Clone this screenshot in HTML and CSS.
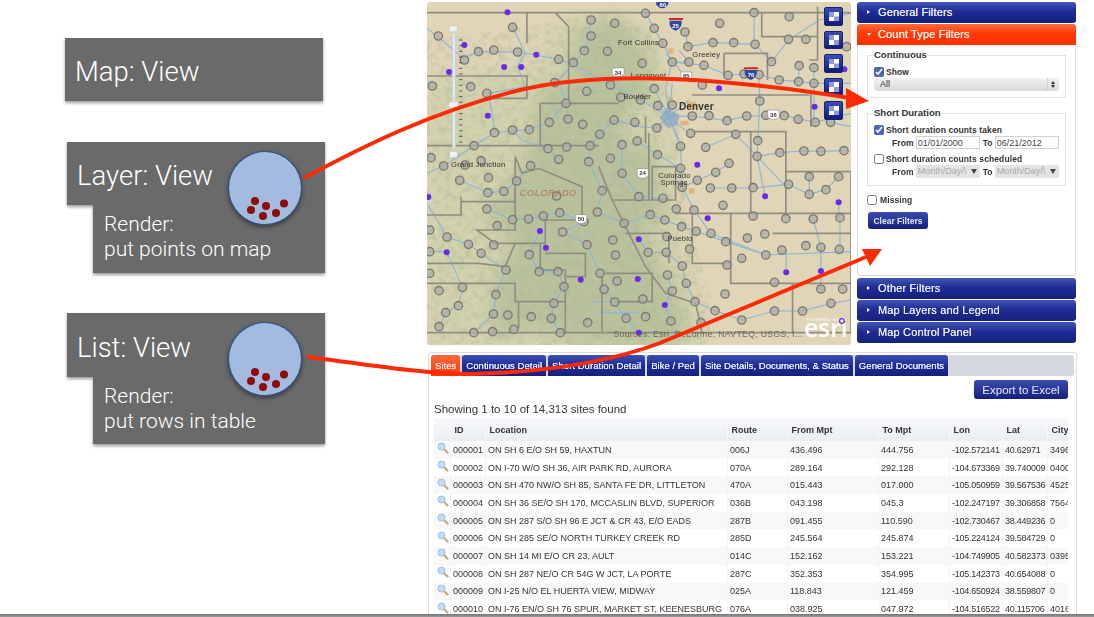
FILE: index.html
```html
<!DOCTYPE html>
<html lang="en">
<head>
    <meta charset="UTF-8">
    <title>Views</title>
    <link rel="stylesheet" href="styles.css">
</head>
<body>
    <div class="slide">
        <div class="notes">
            <div class="noteHead noteSingle">Map: View</div>

            <div class="noteGroup">
                <div class="noteHead">Layer: View</div>
                <div class="noteRender">Render:<br>put points on map</div>
                <svg class="noteDisc" viewBox="0 0 80 80">
                    <use href="#disc"/>
                </svg>
            </div>

            <div class="noteGroup noteGroupList">
                <div class="noteHead">List: View</div>
                <div class="noteRender">Render:<br>put rows in table</div>
                <svg class="noteDisc" viewBox="0 0 80 80">
                    <use href="#disc"/>
                </svg>
            </div>
        </div>

        <div class="app">
            <div class="topRow">
                <div class="map">
                    <svg class="mapArt" viewBox="6 6 1269 1029" preserveAspectRatio="none">
                        <defs>
                            <filter id="soft" x="-10%" y="-10%" width="120%" height="120%"><feGaussianBlur stdDeviation="26"/></filter>
                            <filter id="hills" x="0" y="0" width="100%" height="100%">
                                <feTurbulence type="fractalNoise" baseFrequency="0.05" numOctaves="4" seed="7"/>
                                <feColorMatrix values="0 0 0 0 0.42  0 0 0 0 0.47  0 0 0 0 0.30  2.2 0 0 0 -0.95"/>
                            </filter>
                            <clipPath id="mountains"><path d="M6 120L240 90 420 60 560 30 700 110 770 420 780 640 860 900 850 1035H6Z"/></clipPath>
                        </defs>
                        <rect x="6" y="6" width="1269" height="1029" fill="#e0d5b7"/>
                        <path class="greenPale" filter="url(#soft)" d="M6 230L330 200 400 60 600 30 700 120 760 640 840 1035H6Z"/>
                        <path class="green" filter="url(#soft)" d="M450 90L560 50 660 130 680 280 620 320 580 420 680 440 720 640 650 700 770 920 790 1035H480L320 980 200 1020 200 850 270 730 180 640 300 480 350 260 440 240Z"/>
                        <g clip-path="url(#mountains)"><rect x="6" y="6" width="1269" height="1029" filter="url(#hills)" opacity=".55"/></g>

                        <g class="rivers">
                            <path d="M6 85L50 120 115 175 160 155 277 156 330 165 400 178 440 190 555 255 650 300"/>
                            <path d="M262 82L300 160 277 200 300 260 190 280 210 398"/>
                            <path d="M497 60L480 150 400 240 420 310 372 367 312 389 208 398 147 437 56 498 6 520"/>
                            <path d="M660 40L686 85 712 130 740 186 720 260 730 350 765 440 770 562 805 630 855 700 1020 765 1275 755"/>
                            <path d="M780 96L787 140 860 128 988 133 1037 185 1090 118 1180 60 1275 40"/>
                            <path d="M740 186L835 196 907 226 955 222 1000 224 1060 240 1120 245 1165 250 1275 250"/>
                            <path d="M985 38L985 130M1000 224L1002 303 996 422 994 469 1018 589"/>
                            <path d="M730 350L800 348 904 362 963 348 1075 347 1168 367 1275 340"/>
                            <path d="M730 350L694 384 640 380 566 360 523 403 494 437 490 485 530 572 516 636 596 670 674 644 768 680 812 694 900 725 1020 765"/>
                            <path d="M400 478L368 446 290 420 262 390M316 497L274 543 236 574 188 578 104 541"/>
                            <path d="M185 627L262 659 310 657 403 638 476 665 412 696 485 734 524 820 536 868 568 906 602 955 640 1000"/>
                            <path d="M6 610L66 711 130 733 168 760 242 810 212 884 205 942 146 998"/>
                            <path d="M344 693L312 764 342 815 398 815 416 860 386 910 378 955 405 998"/>
                            <path d="M994 469L1062 458 1134 453 1185 454 1254 452M1150 530L1150 583 1200 569 1238 530M854 564H982L1088 553 1150 583"/>
                            <path d="M840 442L930 403 994 469 1080 560M910 490L870 517 815 541 770 562"/>
                            <path d="M640 718L668 757 722 757 770 798 782 850 808 905 868 932 948 960 1046 933 1130 933 1215 910 1275 900"/>
                            <path d="M1081 817V750M1185 813V742M1185 867V813M1242 653V748M1238 607V653M1162 657L1185 742"/>
                            <path d="M6 755H65L112 862 100 917 62 938 42 980"/>
                            <path d="M500 905H640M520 938H640M736 963L718 915 740 873 726 825"/>
                            <path d="M1120 197L1118 245M1164 203V367M1214 367L1275 380"/>
                            <path d="M590 434L590 520 640 590 712 595M635 423L696 464 765 505"/>
                            <path d="M730 350L686 266M730 350L740 250M730 350L790 300M730 350L645 300M730 350L790 400M730 350L697 317M730 350L760 420M740 186L790 186 760 150M720 160L780 230"/>
                        </g>
                        <path class="urban" d="M702 352L725 325 762 345 756 376 726 384Z"/>
                        <path class="towns" d="M728 145h16v16h-16zM782 305h30v22h-24zM730 292h12v8h-12zM765 362h24v14h-24zM790 565h16v16h-16z"/>

                        <g class="borders">
                            <path d="M6 38H1275M6 998H1275M6 228H305V295H190M305 38V130M390 38L430 80V300"/>
                            <path d="M6 437H520M345 310H580M345 310V437M6 645H108V590M108 605H270V470"/>
                            <path d="M270 470L290 520 340 505 400 530 470 560 470 660M270 560V690H155L210 730H360V660H470"/>
                            <path d="M6 790H160L240 800 270 730M6 850H270V905H420V810H345V730M280 905V985M420 905V998"/>
                            <path d="M560 600H750V500H680V600M670 400V600M660 350V430M520 500L560 600 610 700 660 800 720 880 810 910 830 1000"/>
                            <path d="M750 640H1080V395H800M975 395V640M915 640V850H1275M1080 640H1275M1080 515H1275V1000"/>
                            <path d="M1150 180H1175V20M895 160H1025V240M895 160V230M1008 38V110H1175M1100 850V1000M1040 700H1275"/>
                            <path d="M540 820H680V905H570M530 830V1000M360 760H480V830H420M800 640V790H915M600 700H730V790"/>
                            <path d="M800 285H1150M1155 280V380"/>
                        </g>

                        <g class="nodes">
                            <circle cx="660" cy="40"/><circle cx="985" cy="38"/><circle cx="1090" cy="50"/><circle cx="497" cy="60"/><circle cx="568" cy="70"/><circle cx="262" cy="82"/><circle cx="882" cy="70"/><circle cx="686" cy="85"/><circle cx="778" cy="96"/><circle cx="40" cy="108"/><circle cx="497" cy="108"/><circle cx="1088" cy="118"/><circle cx="1140" cy="118"/><circle cx="1262" cy="140"/><circle cx="862" cy="128"/><circle cx="924" cy="128"/><circle cx="988" cy="133"/><circle cx="787" cy="140"/><circle cx="160" cy="155"/><circle cx="206" cy="150"/><circle cx="277" cy="156"/><circle cx="477" cy="152"/><circle cx="546" cy="154"/><circle cx="712" cy="130"/><circle cx="400" cy="178"/><circle cx="118" cy="180"/><circle cx="444" cy="188"/><circle cx="650" cy="190"/><circle cx="740" cy="186"/><circle cx="790" cy="186"/><circle cx="835" cy="196"/><circle cx="1037" cy="185"/><circle cx="1120" cy="197"/><circle cx="1164" cy="203"/><circle cx="907" cy="226"/><circle cx="955" cy="222"/><circle cx="1000" cy="224"/><circle cx="1060" cy="240"/><circle cx="1118" cy="245"/><circle cx="1164" cy="250"/>
                            <circle cx="22" cy="258"/><circle cx="137" cy="260"/><circle cx="185" cy="280"/><circle cx="388" cy="248"/><circle cx="555" cy="255"/><circle cx="484" cy="274"/><circle cx="686" cy="266"/><circle cx="830" cy="255"/><circle cx="586" cy="292"/><circle cx="645" cy="300"/><circle cx="697" cy="317"/><circle cx="740" cy="315"/><circle cx="422" cy="310"/><circle cx="1002" cy="303"/><circle cx="372" cy="367"/><circle cx="428" cy="357"/><circle cx="472" cy="373"/><circle cx="566" cy="360"/><circle cx="628" cy="367"/><circle cx="694" cy="384"/><circle cx="800" cy="348"/><circle cx="850" cy="347"/><circle cx="904" cy="362"/><circle cx="963" cy="348"/><circle cx="1020" cy="346"/><circle cx="1075" cy="347"/><circle cx="1117" cy="358"/><circle cx="1168" cy="367"/><circle cx="1214" cy="367"/><circle cx="208" cy="398"/><circle cx="262" cy="390"/><circle cx="312" cy="389"/><circle cx="523" cy="403"/><circle cx="795" cy="400"/><circle cx="930" cy="403"/><circle cx="996" cy="422"/><circle cx="147" cy="437"/><circle cx="368" cy="446"/><circle cx="424" cy="441"/><circle cx="494" cy="437"/><circle cx="590" cy="434"/><circle cx="635" cy="423"/><circle cx="765" cy="439"/><circle cx="840" cy="442"/>
                            <circle cx="994" cy="469"/><circle cx="1062" cy="458"/><circle cx="1134" cy="453"/><circle cx="1185" cy="454"/><circle cx="1254" cy="452"/><circle cx="18" cy="473"/><circle cx="56" cy="498"/><circle cx="120" cy="495"/><circle cx="168" cy="482"/><circle cx="316" cy="497"/><circle cx="400" cy="478"/><circle cx="490" cy="485"/><circle cx="555" cy="475"/><circle cx="696" cy="464"/><circle cx="765" cy="505"/><circle cx="910" cy="490"/><circle cx="870" cy="517"/><circle cx="590" cy="520"/><circle cx="104" cy="541"/><circle cx="190" cy="533"/><circle cx="274" cy="543"/><circle cx="815" cy="541"/><circle cx="1150" cy="530"/><circle cx="1238" cy="530"/><circle cx="1088" cy="553"/><circle cx="854" cy="564"/><circle cx="918" cy="564"/><circle cx="982" cy="563"/><circle cx="770" cy="562"/><circle cx="530" cy="572"/><circle cx="188" cy="578"/><circle cx="236" cy="574"/><circle cx="1200" cy="569"/><circle cx="1150" cy="583"/><circle cx="640" cy="590"/><circle cx="712" cy="595"/><circle cx="892" cy="616"/><circle cx="394" cy="588"/><circle cx="185" cy="627"/><circle cx="752" cy="627"/><circle cx="805" cy="630"/><circle cx="403" cy="638"/><circle cx="516" cy="636"/><circle cx="262" cy="659"/><circle cx="310" cy="657"/><circle cx="354" cy="648"/><circle cx="476" cy="665"/><circle cx="596" cy="670"/><circle cx="674" cy="644"/><circle cx="718" cy="660"/><circle cx="982" cy="648"/><circle cx="1080" cy="656"/><circle cx="1162" cy="657"/><circle cx="1242" cy="653"/>
                            <circle cx="216" cy="677"/><circle cx="768" cy="680"/><circle cx="812" cy="694"/><circle cx="856" cy="700"/><circle cx="900" cy="725"/><circle cx="965" cy="714"/><circle cx="1017" cy="702"/><circle cx="14" cy="690"/><circle cx="412" cy="696"/><circle cx="66" cy="711"/><circle cx="130" cy="733"/><circle cx="206" cy="735"/><circle cx="562" cy="720"/><circle cx="724" cy="710"/><circle cx="485" cy="734"/><circle cx="14" cy="755"/><circle cx="168" cy="760"/><circle cx="312" cy="764"/><circle cx="668" cy="757"/><circle cx="722" cy="757"/><circle cx="792" cy="747"/><circle cx="570" cy="765"/><circle cx="1020" cy="765"/><circle cx="1068" cy="750"/><circle cx="1140" cy="737"/><circle cx="1185" cy="742"/><circle cx="1240" cy="748"/><circle cx="948" cy="775"/><circle cx="242" cy="810"/><circle cx="904" cy="795"/><circle cx="770" cy="798"/><circle cx="342" cy="815"/><circle cx="398" cy="815"/><circle cx="524" cy="820"/><circle cx="726" cy="825"/><circle cx="14" cy="820"/><circle cx="1046" cy="847"/><circle cx="575" cy="843"/><circle cx="782" cy="850"/><circle cx="112" cy="862"/><circle cx="42" cy="872"/><circle cx="416" cy="860"/><circle cx="536" cy="868"/><circle cx="740" cy="873"/><circle cx="1185" cy="867"/><circle cx="1250" cy="867"/><circle cx="212" cy="884"/><circle cx="898" cy="882"/><circle cx="652" cy="897"/><circle cx="568" cy="906"/><circle cx="386" cy="910"/><circle cx="808" cy="905"/><circle cx="100" cy="917"/><circle cx="1215" cy="910"/><circle cx="62" cy="938"/><circle cx="205" cy="942"/><circle cx="248" cy="945"/><circle cx="318" cy="950"/><circle cx="1046" cy="933"/><circle cx="1130" cy="933"/><circle cx="868" cy="932"/><circle cx="660" cy="950"/><circle cx="602" cy="955"/><circle cx="378" cy="955"/><circle cx="948" cy="960"/><circle cx="736" cy="963"/><circle cx="826" cy="968"/><circle cx="487" cy="968"/><circle cx="42" cy="980"/><circle cx="266" cy="988"/><circle cx="146" cy="998"/><circle cx="202" cy="995"/><circle cx="405" cy="998"/>
                        </g>
                        <g class="sites">
                            <circle cx="247" cy="37"/><circle cx="118" cy="135"/><circle cx="333" cy="164"/><circle cx="237" cy="201"/><circle cx="288" cy="201"/><circle cx="72" cy="216"/><circle cx="188" cy="347"/><circle cx="880" cy="265"/><circle cx="1166" cy="320"/><circle cx="815" cy="494"/><circle cx="10" cy="591"/><circle cx="1018" cy="589"/><circle cx="1238" cy="607"/><circle cx="846" cy="655"/><circle cx="344" cy="693"/><circle cx="640" cy="718"/><circle cx="362" cy="743"/><circle cx="65" cy="757"/><circle cx="466" cy="839"/><circle cx="637" cy="837"/><circle cx="1081" cy="817"/><circle cx="1185" cy="813"/><circle cx="718" cy="915"/><circle cx="640" cy="998"/><circle cx="1255" cy="208"/>
                        </g>

                        <g class="shields">
                            <path d="M692 6H728V14Q710 36 692 14Z"/><path d="M732 62H768V72Q766 86 750 92 734 86 732 72Z"/><path d="M957 210H993V220Q991 234 975 240 959 234 957 220Z"/>
                            <path class="redBar" d="M730 54H772v6H730ZM955 202H997v6H955Z"/>
                        </g>
                        <g class="usShields">
                            <path d="M560 204H596V222Q590 230 578 230 566 230 560 222Z"/><path d="M766 216H798V236H766Z"/><path d="M1026 330H1060V352Q1043 366 1026 352Z"/><path d="M635 506H668V528Q651 542 635 528Z"/><path d="M450 644H484V664Q467 678 450 664Z"/>
                        </g>
                        <g class="shieldText">
                            <text x="712" y="20" fill="#fff">80</text><text x="750" y="83" fill="#fff">25</text><text x="976" y="232" fill="#fff">76</text>
                            <text x="578" y="224">34</text><text x="782" y="233">85</text><text x="1043" y="351">36</text><text x="651" y="526">24</text><text x="467" y="664">50</text>
                        </g>

                        <g class="places">
                            <text x="578" y="135">Fort Collins</text>
                            <text x="800" y="171">Greeley</text>
                            <text x="616" y="234">Longmont</text>
                            <text x="594" y="297">Boulder</text>
                            <text class="placeBig" x="760" y="330">Denver</text>
                            <text x="78" y="500">Grand Junction</text>
                            <text class="stateName" x="284" y="587">COLORADO</text>
                            <text x="698" y="533">Colorado</text>
                            <text x="705" y="555">Springs</text>
                            <text x="726" y="724">Pueblo</text>
                            <text class="sources" x="564" y="1011">Sources: Esri, DeLorme, NAVTEQ, USGS, I...</text>
                        </g>

                        <g class="zoomBar">
                            <rect class="zoomTrack" x="82" y="100" width="9" height="345"/>
                            <path class="zoomTicks" d="M102 120h10M102 137h10M102 154h10M102 171h10M102 188h10M102 205h10M102 222h10M102 239h10M102 256h10M102 273h10M102 290h10M102 307h10M102 324h10M102 341h10M102 358h10M102 375h10M102 392h10M102 409h10M102 426h10"/>
                            <rect class="zoomEnd" x="74" y="78" width="22" height="17"/>
                            <rect class="zoomEnd" x="74" y="455" width="22" height="17"/>
                            <rect class="zoomHandle" x="72" y="306" width="27" height="17"/>
                        </g>

                        <text class="esriSmall" x="1142" y="964">POWERED BY</text>
                        <text class="esriMark" x="1134" y="1011">esri</text>
                        <circle class="esriDot" cx="1248" cy="963" r="7"/>
                    </svg>

                    <div class="mapTools">
                        <div class="mapTool"><i></i></div>
                        <div class="mapTool"><i></i></div>
                        <div class="mapTool"><i></i></div>
                        <div class="mapTool"><i></i></div>
                        <div class="mapTool"><i></i></div>
                    </div>
                </div>

                <div class="accordion">
                    <div class="accHead"><span class="caret"></span>General Filters</div>
                    <div class="accHead accOpen"><span class="caret caretDown"></span>Count Type Filters</div>
                    <div class="accBody">
                        <fieldset class="group">
                            <legend>Continuous</legend>
                            <label class="check"><input type="checkbox" checked>Show</label>
                            <div class="selectBox">All<span class="selectArrows"></span></div>
                        </fieldset>
                        <fieldset class="group groupShort">
                            <legend>Short Duration</legend>
                            <label class="check"><input type="checkbox" checked>Short duration counts taken</label>
                            <div class="dates">
                                <span>From</span><input class="dateInput" type="text" value="01/01/2000">
                                <span>To</span><input class="dateInput" type="text" value="06/21/2012">
                            </div>
                            <label class="check checkLater"><input type="checkbox">Short duration counts scheduled</label>
                            <div class="dates">
                                <span>From</span><div class="dateOff">Month/Day/\</div>
                                <span>To</span><div class="dateOff">Month/Day/\</div>
                            </div>
                        </fieldset>
                        <label class="check checkMissing"><input type="checkbox">Missing</label>
                        <button class="clearBtn">Clear Filters</button>
                    </div>
                    <div class="accHead"><span class="caret"></span>Other Filters</div>
                    <div class="accHead"><span class="caret"></span>Map Layers and Legend</div>
                    <div class="accHead"><span class="caret"></span>Map Control Panel</div>
                </div>
            </div>

            <div class="sitesPanel">
                <div class="tabs">
                    <div class="tab tabActive">Sites</div>
                    <div class="tab">Continuous Detail</div>
                    <div class="tab">Short Duration Detail</div>
                    <div class="tab">Bike / Ped</div>
                    <div class="tab">Site Details, Documents, &amp; Status</div>
                    <div class="tab">General Documents</div>
                </div>
                <div class="sitesBody">
                    <div class="exportRow"><button class="exportBtn">Export to Excel</button></div>
                    <div class="showing">Showing 1 to 10 of 14,313 sites found</div>
                    <div class="tableWrap">
                        <table class="siteTable">
                            <colgroup>
                                <col class="colIcon"><col class="colId"><col class="colLoc"><col class="colRoute"><col class="colFrom"><col class="colTo"><col class="colLon"><col class="colLat"><col class="colCity">
                            </colgroup>
                            <thead>
                                <tr><th></th><th>ID</th><th>Location</th><th>Route</th><th>From Mpt</th><th>To Mpt</th><th>Lon</th><th>Lat</th><th>City</th></tr>
                            </thead>
                            <tbody>
                                <tr><td><svg class="lens"><use href="#lens"/></svg></td><td>000001</td><td>ON SH 6 E/O SH 59, HAXTUN</td><td>006J</td><td>436.496</td><td>444.756</td><td>-102.572141</td><td>40.62971</td><td>3496</td></tr>
                                <tr><td><svg class="lens"><use href="#lens"/></svg></td><td>000002</td><td>ON I-70 W/O SH 36, AIR PARK RD, AURORA</td><td>070A</td><td>289.164</td><td>292.128</td><td>-104.673369</td><td>39.740009</td><td>0400</td></tr>
                                <tr><td><svg class="lens"><use href="#lens"/></svg></td><td>000003</td><td>ON SH 470 NW/O SH 85, SANTA FE DR, LITTLETON</td><td>470A</td><td>015.443</td><td>017.000</td><td>-105.050959</td><td>39.567536</td><td>4525</td></tr>
                                <tr><td><svg class="lens"><use href="#lens"/></svg></td><td>000004</td><td>ON SH 36 SE/O SH 170, MCCASLIN BLVD, SUPERIOR</td><td>036B</td><td>043.198</td><td>045.3</td><td>-102.247197</td><td>39.306858</td><td>7564</td></tr>
                                <tr><td><svg class="lens"><use href="#lens"/></svg></td><td>000005</td><td>ON SH 287 S/O SH 96 E JCT &amp; CR 43, E/O EADS</td><td>287B</td><td>091.455</td><td>110.590</td><td>-102.730467</td><td>38.449236</td><td>0</td></tr>
                                <tr><td><svg class="lens"><use href="#lens"/></svg></td><td>000006</td><td>ON SH 285 SE/O NORTH TURKEY CREEK RD</td><td>285D</td><td>245.564</td><td>245.874</td><td>-105.224124</td><td>39.584729</td><td>0</td></tr>
                                <tr><td><svg class="lens"><use href="#lens"/></svg></td><td>000007</td><td>ON SH 14 MI E/O CR 23, AULT</td><td>014C</td><td>152.162</td><td>153.221</td><td>-104.749905</td><td>40.582373</td><td>0395</td></tr>
                                <tr><td><svg class="lens"><use href="#lens"/></svg></td><td>000008</td><td>ON SH 287 NE/O CR 54G W JCT, LA PORTE</td><td>287C</td><td>352.353</td><td>354.995</td><td>-105.142373</td><td>40.654088</td><td>0</td></tr>
                                <tr><td><svg class="lens"><use href="#lens"/></svg></td><td>000009</td><td>ON I-25 N/O EL HUERTA VIEW, MIDWAY</td><td>025A</td><td>118.843</td><td>121.459</td><td>-104.650924</td><td>38.559807</td><td>0</td></tr>
                                <tr><td><svg class="lens"><use href="#lens"/></svg></td><td>000010</td><td>ON I-76 EN/O SH 76 SPUR, MARKET ST, KEENESBURG</td><td>076A</td><td>038.925</td><td>047.972</td><td>-104.516522</td><td>40.115706</td><td>4016</td></tr>
                            </tbody>
                        </table>
                    </div>
                </div>
            </div>
        </div>

        <svg class="arrows" viewBox="0 0 1094 617">
            <path d="M304 178C360 148 430 112 520 90C580 76 650 76 720 82C770 86 815 92 850 98"/>
            <polygon points="846,88 869,101 846,109"/>
            <path d="M307 357C350 362 420 374 470 374C560 372 620 358 660 343L866 257"/>
            <polygon points="882,249 862,249 870,266"/>
        </svg>
    </div>
    <div class="slideEdge"></div>

    <svg class="iconDefs">
        <defs>
            <g id="disc">
                <circle cx="40" cy="40" r="36.5" fill="#a4bbe0" stroke="#2f5488" stroke-width="1.2"/>
                <g fill="#8f0c0c">
                    <circle cx="30" cy="53" r="4"/><circle cx="41" cy="58" r="4"/><circle cx="59" cy="55.500" r="4"/>
                    <circle cx="26" cy="62" r="4"/><circle cx="38" cy="68" r="4"/><circle cx="51" cy="65" r="4"/>
                </g>
            </g>
            <g id="lens">
                <path d="M7 7L10.500 10.500" stroke="#c9a878" stroke-width="2.200" stroke-linecap="round"/>
                <circle cx="4.500" cy="4.500" r="3.500" fill="#c4dcf2" stroke="#9cc0e0"/>
            </g>
        </defs>
    </svg>
</body>
</html>
```

FILE: styles.css
```css
:root{
    --navy: #1f2c95;
    --navyDark: #16207c;
    --orange: #ff3a06;
    --cardGrey: #6a6a6a;
    --arrowRed: #fd2a06;
}
*{
    box-sizing: border-box;
}
html{
    height: 100%;
}
body{
    height: 617px;
    margin: 0;
    display: flex;
    flex-direction: column;
    background: #ffffff;
    font-family: "Liberation Sans", Arial, sans-serif;
    overflow: hidden;
}
.slide{
    position: relative;
    flex: 1;
    min-height: 0;
    display: flex;
    overflow: hidden;
}
.slideEdge{
    height: 3px;
    background: linear-gradient(#70757a, #9a9da1);
}
.iconDefs{
    position: absolute;
    width: 0;
    height: 0;
}

/* left hand notes */
.notes{
    width: 427px;
    flex: none;
    padding: 38px 0 0 65px;
    color: #ffffff;
    font-family: Roboto, "Liberation Sans", sans-serif;
    font-weight: 300;
}
.noteHead{
    width: 258px;
    height: 63px;
    padding: 4px 0 0 10px;
    display: flex;
    align-items: center;
    background: var(--cardGrey);
    box-shadow: 0 2px 3px rgba(0,0,0,0.4);
    font-size: 27.500px;
}
.noteGroup{
    position: relative;
    width: 258px;
    margin: 41px 0 0 2px;
}
.noteGroupList{
    margin-top: 40px;
}
.noteGroupList .noteHead{
    height: 64px;
}
.noteGroupList .noteRender{
    height: 67px;
}
.noteRender{
    position: relative;
    height: 68px;
    margin-left: 26px;
    padding: 7px 0 0 11px;
    background: var(--cardGrey);
    box-shadow: 0 2px 3px rgba(0,0,0,0.4);
    font-size: 21px;
    line-height: 25px;
}
.noteDisc{
    position: absolute;
    left: 158px;
    top: 6px;
    width: 80px;
    height: 80px;
    filter: drop-shadow(0 2px 2px rgba(0,0,0,0.45));
}

/* app screenshot */
.app{
    width: 650px;
    flex: none;
    padding-top: 2px;
    filter: blur(0.35px);
}
.topRow{
    display: flex;
    gap: 6px;
}
.map{
    position: relative;
    width: 424px;
    height: 343px;
    flex: none;
    border-radius: 3px;
    overflow: hidden;
}
.mapArt{
    display: block;
    width: 100%;
    height: 100%;
}
.green{
    fill: #b9c29c;
}
.greenPale{
    fill: #d3d2ad;
}
.rivers path{
    fill: none;
    stroke: #8fb5d8;
    stroke-width: 3.500;
}
.urban{
    fill: #8aa6c6;
    opacity: 0.75;
}
.towns{
    fill: #dca765;
    opacity: 0.7;
}
.borders path{
    fill: none;
    stroke: #908e83;
    stroke-width: 5;
}
.nodes circle{
    r: 12.500px;
    fill: #b0aea4;
    fill-opacity: 0.8;
    stroke: #7a7972;
    stroke-width: 4;
}
.sites circle{
    r: 9px;
    fill: #6a2be8;
}
.shields path{
    fill: #2f4a9c;
}
.shields .redBar{
    fill: #d7281f;
}
.usShields path{
    fill: #ffffff;
    stroke: #777777;
    stroke-width: 1.500;
}
.shieldText text{
    font-size: 18px;
    font-weight: 700;
    text-anchor: middle;
    fill: #333333;
}
.shieldText text[fill]{
    fill: #ffffff;
}
.places text{
    font-size: 23px;
    fill: #35342e;
    letter-spacing: 0.5px;
}
.places .placeBig{
    font-size: 30px;
    font-weight: 700;
}
.places .stateName{
    font-size: 27px;
    font-style: italic;
    fill: #b07258;
    letter-spacing: 2px;
}
.places .sources{
    font-size: 26px;
    fill: #55534c;
    opacity: 0.8;
    letter-spacing: 1px;
}
.zoomTrack{
    fill: #dfe9f3;
    stroke: #a9bfd8;
}
.zoomTicks{
    stroke: #444444;
    stroke-width: 2.500;
}
.zoomEnd,
.zoomHandle{
    fill: #eef1f6;
    stroke: #b6c4d6;
}
.esriSmall{
    font-size: 13px;
    fill: #ffffff;
    letter-spacing: 1px;
}
.esriMark{
    font-family: "Open Sans", sans-serif;
    font-size: 74px;
    font-weight: 600;
    fill: #ffffff;
}
.esriDot{
    fill: #ffffff;
    stroke: #6a2be8;
    stroke-width: 4;
}
.mapTools{
    position: absolute;
    top: 5px;
    right: 8px;
    display: flex;
    flex-direction: column;
    gap: 5px;
}
.mapTool{
    width: 19px;
    height: 18.500px;
    padding: 3.500px;
    background: linear-gradient(#3c4cb4, #101a78);
    border: 1px solid #1a2270;
    border-radius: 2px;
}
.mapTool i{
    display: block;
    width: 100%;
    height: 100%;
    background:
        linear-gradient(#ffffff, #ffffff) right top / 50% 50% no-repeat,
        linear-gradient(#ffffff, #ffffff) left bottom / 50% 50% no-repeat,
        #8f9ad8;
}

/* accordion */
.accordion{
    width: 219px;
    flex: none;
    display: flex;
    flex-direction: column;
    gap: 1px;
}
.accHead{
    height: 21px;
    padding: 0 0 1px 10px;
    display: flex;
    align-items: center;
    background: linear-gradient(#4355b6, var(--navy) 45%, var(--navyDark));
    border-radius: 3px;
    color: #e4e8fb;
    font-size: 11px;
    letter-spacing: 0.15px;
    text-shadow: 0 0 0.6px #ffffff;
}
.accOpen{
    background: linear-gradient(#ff6a3a, var(--orange) 45%, #fb3000);
    border-radius: 3px 3px 0 0;
    color: #ffece6;
}
.caret{
    width: 0;
    height: 0;
    margin-right: 8px;
    border-left: 3px solid #ffffff;
    border-top: 2.500px solid transparent;
    border-bottom: 2.500px solid transparent;
}
.caretDown{
    border-top: 3px solid #ffffff;
    border-bottom: 0;
    border-left: 2.500px solid transparent;
    border-right: 2.500px solid transparent;
    margin-right: 7px;
}
.accBody{
    height: 231px;
    margin: -1px 0 1px;
    padding: 4px 9px 0;
    border: 1px solid #dcdcdc;
    border-top: 0;
    border-radius: 0 0 3px 3px;
    background: #ffffff;
    color: #333333;
    font-size: 8.500px;
    font-weight: 700;
}
.group{
    min-width: 0;
    height: 49px;
    margin: 0;
    padding: 5px 6px 0;
    border: 1px solid #e2e2e2;
}
.group legend{
    padding: 0;
    font-size: 9.500px;
    line-height: 12px;
    color: #333333;
}
.groupShort{
    height: 79px;
    margin-top: 9px;
}
.check{
    display: flex;
    align-items: center;
    height: 12px;
    letter-spacing: 0.1px;
}
.check input{
    width: 10px;
    height: 10px;
    margin: 0 2px 0 0;
    accent-color: #4a66b8;
}
.selectBox{
    position: relative;
    height: 13px;
    padding-left: 6px;
    border-radius: 4px;
    background: linear-gradient(#f2f2f2, #d9d9d9);
    font-size: 9px;
    font-weight: 400;
    line-height: 13px;
}
.selectArrows{
    position: absolute;
    right: 1px;
    top: 0;
    width: 11px;
    height: 13px;
    border-left: 1px solid #d0d0d0;
}
.selectArrows::before,
.selectArrows::after{
    content: "";
    position: absolute;
    left: 3px;
    border-left: 2px solid transparent;
    border-right: 2px solid transparent;
}
.selectArrows::before{
    top: 3px;
    border-bottom: 3px solid #333333;
}
.selectArrows::after{
    top: 7px;
    border-top: 3px solid #333333;
}
.dates{
    display: flex;
    align-items: center;
    height: 13px;
    padding-left: 18px;
    gap: 2px;
}
.dates span{
    letter-spacing: 0.1px;
}
.dates span + input,
.dates span + div{
    margin-right: 1px;
}
.dateInput{
    width: 64px;
    height: 13px;
    flex: none;
    padding: 0 1px;
    border: 1px solid #d2d2d2;
    font: 400 9px "Liberation Sans", Arial, sans-serif;
    color: #444444;
    outline: 0;
}
.dateOff{
    position: relative;
    width: 64px;
    height: 13px;
    flex: none;
    padding-left: 2px;
    background: #e4e4e4;
    color: #a9a9a9;
    font-size: 9px;
    font-weight: 400;
    line-height: 13px;
}
.dateOff::after{
    content: "";
    position: absolute;
    right: 3px;
    top: 4px;
    border-top: 5px solid #444444;
    border-left: 3px solid transparent;
    border-right: 3px solid transparent;
}
.checkLater{
    margin-top: 4px;
}
.checkMissing{
    margin-top: 8px;
}
.checkMissing input{
    margin-right: 3px;
}
.clearBtn{
    display: block;
    width: 60px;
    height: 17px;
    margin: 6px 0 0 1px;
    padding: 0;
    border: 0;
    border-radius: 3px;
    background: linear-gradient(#3a4cb0, var(--navyDark));
    color: #dfe3fa;
    font: 700 8.500px "Liberation Sans", Arial, sans-serif;
}

/* sites panel */
.sitesPanel{
    height: 269px;
    margin: 7px 0 0 1px;
    padding: 2px;
    border: 1px solid #dcdde2;
    border-bottom: 0;
    border-radius: 4px 4px 0 0;
    overflow: hidden;
}
.tabs{
    height: 21px;
    display: flex;
    gap: 2px;
    background: #d6d8e0;
    border-radius: 3px;
}
.tab{
    padding: 0 4px;
    display: flex;
    align-items: center;
    background: linear-gradient(#3e50b4, var(--navy) 50%, var(--navyDark));
    border-radius: 3px 3px 0 0;
    color: #e8ebfc;
    font-size: 9.600px;
    white-space: nowrap;
    text-shadow: 0 0 0.5px #ffffff;
}
.tabActive{
    background: linear-gradient(#ff6a3a, var(--orange));
}
.sitesBody{
    padding: 4px 6px 0 3px;
}
.exportRow{
    display: flex;
    justify-content: flex-end;
}
.exportBtn{
    width: 94px;
    height: 19px;
    padding: 0;
    border: 0;
    border-radius: 3px;
    background: linear-gradient(#3a4cb0, var(--navyDark));
    color: #e8ebfc;
    font: 400 11.500px "Liberation Sans", Arial, sans-serif;
}
.showing{
    height: 19px;
    padding-top: 3px;
    color: #333333;
    font-size: 11.500px;
    line-height: 15px;
}
.tableWrap{
    overflow: hidden;
}
.siteTable{
    width: 680px;
    table-layout: fixed;
    border-collapse: collapse;
    color: #333333;
    font-size: 9px;
}
.colIcon{ width: 16px; }
.colId{ width: 35px; }
.colLoc{ width: 242px; }
.colRoute{ width: 60px; }
.colFrom{ width: 91px; }
.colTo{ width: 71px; }
.colLon{ width: 53px; }
.colLat{ width: 45px; }
.colCity{ width: 67px; }
.siteTable th{
    height: 23px;
    padding: 0 0 0 4px;
    text-align: left;
    background: linear-gradient(#f7f8fb, #e9edf4);
    border-right: 1px solid #f8f8fa;
}
.siteTable td{
    height: 17.700px;
    padding: 0 0 0 2.500px;
    white-space: nowrap;
    overflow: hidden;
    border-right: 1px solid #f4f4f4;
}
.siteTable td:nth-child(7),
.siteTable td:nth-child(8){
    letter-spacing: -0.25px;
}
.siteTable tbody tr:nth-child(odd){
    background: #f8f8f8;
}
.lens{
    display: block;
    width: 12px;
    height: 12px;
    margin-top: -3px;
}

.arrows{
    position: absolute;
    left: 0;
    top: 0;
    width: 1094px;
    height: 617px;
    pointer-events: none;
}
.arrows path{
    fill: none;
    stroke: var(--arrowRed);
    stroke-width: 4;
}
.arrows polygon{
    fill: var(--arrowRed);
}
```
